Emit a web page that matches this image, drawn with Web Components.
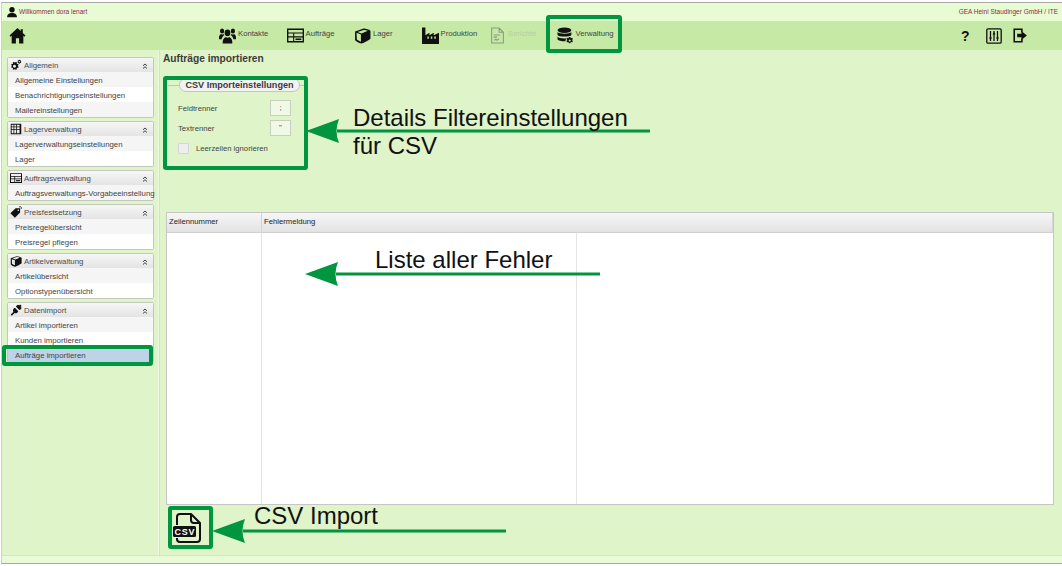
<!DOCTYPE html>
<html lang="de">
<head>
<meta charset="utf-8">
<title>Aufträge importieren</title>
<style>
    html, body { margin: 0; padding: 0; background: #fff; }
    body { font-family: "Liberation Sans", Arial, sans-serif; font-size: 8px; color: #333; }
</style>
</head>
<body>
<app-shell>
    <top-strip slot="top">
        <span slot="left">Willkommen dora lenart</span>
        <span slot="right">GEA Heini Staudinger GmbH / ITE</span>
    </top-strip>
    <main-nav slot="nav">
        <nav-item icon="people">Kontakte</nav-item>
        <nav-item icon="orders">Aufträge</nav-item>
        <nav-item icon="box">Lager</nav-item>
        <nav-item icon="factory">Produktion</nav-item>
        <nav-item icon="report" disabled>Berichte</nav-item>
        <nav-item icon="database">Verwaltung</nav-item>
    </main-nav>

    <side-panel slot="side" icon="cogs" label="Allgemein">
        <side-link>Allgemeine Einstellungen</side-link>
        <side-link>Benachrichtigungseinstellungen</side-link>
        <side-link>Mailereinstellungen</side-link>
    </side-panel>
    <side-panel slot="side" icon="grid" label="Lagerverwaltung">
        <side-link>Lagerverwaltungseinstellungen</side-link>
        <side-link>Lager</side-link>
    </side-panel>
    <side-panel slot="side" icon="orders" label="Auftragsverwaltung">
        <side-link>Auftragsverwaltungs-Vorgabeeinstellung</side-link>
    </side-panel>
    <side-panel slot="side" icon="tags" label="Preisfestsetzung">
        <side-link>Preisregelübersicht</side-link>
        <side-link>Preisregel pflegen</side-link>
    </side-panel>
    <side-panel slot="side" icon="box" label="Artikelverwaltung">
        <side-link>Artikelübersicht</side-link>
        <side-link>Optionstypenübersicht</side-link>
    </side-panel>
    <side-panel slot="side" icon="plug" label="Datenimport">
        <side-link>Artikel importieren</side-link>
        <side-link>Kunden importieren</side-link>
        <side-link selected>Aufträge importieren</side-link>
    </side-panel>

    <import-view></import-view>
</app-shell>
<note-layer></note-layer>

<script>
const ICONS = {
    user: '<circle cx="8" cy="5" r="3.6"/><path d="M1.500 15c0-4 2.500-5 4.500-5.600h4c2 .6 4.500 1.600 4.500 5.600z"/>',
    home: '<path fill-rule="evenodd" d="M8 1 .5 8l1 1.100L2.500 8.200V15.500h4v-5h3v5h4V8.200l1 .9 1-1.100-2.500-2.300V2h-2v1.800z"/>',
    people: '<ellipse cx="8" cy="5.500" rx="2.700" ry="3.200"/><path d="M3.500 15.500c-.3-3 .5-5.500 3-6.200l1.500 1 1.500-1c2.500.7 3.300 3.200 3 6.200z"/><ellipse cx="2.900" cy="3.800" rx="2" ry="2.400"/><ellipse cx="13.100" cy="3.800" rx="2" ry="2.400"/><path d="M0 11.500c-.2-2.700.4-4.500 1.900-5l1 .7 1-.7c.6.300 1 .6 1.300 1-1.700 1-2.500 2.400-2.700 4zM16 11.500c.2-2.700-.4-4.500-1.900-5l-1 .7-1-.7c-.6.300-1 .6-1.300 1 1.700 1 2.500 2.400 2.700 4z"/>',
    orders: '<path fill-rule="evenodd" d="M0 1.500h16v13H0zm1.300 1.300v2.400h13.400V2.800zm0 3.400v2.600h4.500V6.200zm5.500 0v2.600h7.900V6.200zM1.300 9.800v3.400h4.500V9.800zm5.500 0v3.400h7.900V9.800z"/><path d="M8 10.800h5.500v1.500H8z"/>',
    box: '<path fill-rule="evenodd" d="M1 4.200 9 1.500c2.500.2 5 .8 6.500 2V11c-2.500 2-5.500 3.500-8.500 4.500-2.500-.5-4.500-1.500-6-3zm1.400 1.300.3 6.300c1.300 1 2.700 1.700 3.800 2V7zm1-.9L7 6l6-2.500c-1.200-.5-2.600-.8-4-.7z"/><path d="M8 7 14.500 4.400V10.500C12.500 12 10 13.500 8 14.300z"/><path fill="#c6e9a6" d="M3.500 8l2 .7v2l-2-.7z"/>',
    factory: '<path fill-rule="evenodd" d="M0 .5h3.200v7.200L7 5.500v2.200L11 5.500v2.200l5-2.200v10.500H0zm5 8.500v2h1.400V9zm3.300 0v2h1.400V9zm3.300 0v2H13V9z"/>',
    report: '<path fill="none" stroke="#8b9a80" stroke-width="1" d="M2.500 1h7l4 4v10h-11zM9.500 1v4h4M4.500 7.500h6M4.500 9.500h3M5 12.500l1.500-1 1 1 2-1.500"/>',
    database: '<ellipse cx="7" cy="3" rx="6.500" ry="2.600"/><path d="M.5 4.800c1 2 12 2 13 0v2.700c-1 2-12 2-13 0zM.5 9c1 2 7 2 8.500 1.600-.7.800-1 1.500-1 2.800-3 .2-6.700-.5-7.500-1.700z"/><path fill-rule="evenodd" d="M12.500 9.300l.6 1.200 1.300-.3.500 1.300-.9.800.9.800-.5 1.300-1.300-.3-.6 1.200h-1.200l-.6-1.200-1.300.3-.5-1.300.9-.8-.9-.8.5-1.300 1.300.3.600-1.200zM12 11.700a1 1 0 1 0 .01 0z"/>',
    cogs: '<path fill-rule="evenodd" d="M6 4.500l1 .2.800-.9 1.500.9-.4 1.200.7.700 1.200-.3.700 1.600-1 .7v1l1 .7-.7 1.600-1.200-.3-.7.700.4 1.200-1.500.9-.8-.9h-1l-.8.900-1.500-.9.400-1.200-.7-.7-1.200.3-.7-1.600 1-.7v-1l-1-.7.700-1.600 1.200.3.700-.7-.4-1.200 1.500-.9.800.9zm0 3a2 2 0 1 0 .01 0z"/><path fill-rule="evenodd" d="M13 1l.4 1 1.100-.2.400 1.100-.8.700.8.700-.4 1.100-1.100-.2L13 6.200h-1l-.4-1-1.100.2-.4-1.100.8-.7-.8-.7.4-1.100 1.100.2.400-1zm-.5 1.800a.8.800 0 1 0 .01 0z"/>',
    grid: '<path fill-rule="evenodd" d="M1 1h14v14H1zm1.200 1.200v2.500h2.500V2.200zm3.500 0v2.500h2.500V2.200zm3.500 0v2.500h3.600V2.200zM2.200 5.700v2.500h2.500V5.700zm3.500 0v2.500h2.500V5.700zm3.500 0v2.500h3.600V5.700zM2.200 9.200v4.600h2.500V9.200zm3.500 0v4.600h2.500V9.200zm3.500 0v4.600h3.600V9.200z"/>',
    tags: '<path fill-rule="evenodd" d="M7.500 3h6v5.500l-7 7-6-6zm3.500 1.500a1 1 0 1 0 .01 0z"/><path fill="none" stroke="currentColor" d="M12 1.500c2-1.500 4-.2 3 2.500"/>',
    plug: '<path d="M6.500 5l4.500 4.500c-1 2.500-3 3.500-5 2.500l-3.500 3.500L1 14l3.500-3.500C3.500 8.500 4 6 6.500 5zM8 3.500 12.500 8c1.500-.5 2.500-1.500 3-3L14 4 15.500 2.500 13.500.5 12 2l-1-1C9.500 1.500 8.500 2 8 3.500z"/>',
    tune: '<path fill="none" stroke="currentColor" stroke-width="1.300" d="M2 .8h12c.7 0 1.200.5 1.200 1.200v12c0 .7-.5 1.200-1.200 1.200H2c-.7 0-1.200-.5-1.200-1.200V2C.8 1.300 1.300.8 2 .8zM4.500 3v10M8 3v10M11.500 3v10"/><path d="M3 9.500h3L4.500 12zM6.500 6.500h3L8 4zM10 9.500h3L11.500 12z"/>',
    exit: '<path fill="none" stroke="currentColor" stroke-width="1.700" d="M9.500 4.500V1.300H1.300v13.400h8.200v-3.200"/><path d="M4.500 6.200H9V3.300L14.800 8 9 12.700V9.800H4.500z"/>'
};

function iconSvg(name, size) {
    return `<svg xmlns="http://www.w3.org/2000/svg" viewBox="0 0 16 16" width="${size}" height="${size}" fill="currentColor" style="display:block">${ICONS[name]}</svg>`;
}

class AppShell extends HTMLElement {
    constructor() {
        super();
        this.attachShadow({ mode: 'open' }).innerHTML = `
            <style>
                :host { display: flex; flex-direction: column; width: 1062px; height: 566px; box-sizing: border-box; padding: 2px 0 2px 1px; background: #fff; overflow: hidden; }
                .frame { flex: 1; display: flex; flex-direction: column; min-height: 0; border-top: 1px solid #a9a9a9; border-left: 1px solid #c8d8bc; background: #dff4c8; }
                .body { flex: 1; display: flex; min-height: 0; }
                .side { width: 147px; padding: 7px 4px 0 5px; display: flex; flex-direction: column; gap: 3px; border-right: 1px solid #eef9e2; box-shadow: 1px 0 0 #cfe6b6; flex: none; }
                .main { flex: 1; min-width: 0; }
                .foot { height: 7px; background: #e9fad6; border-top: 1px solid #d3e8bd; flex: none; }
                .rule { height: 1px; background: #a9a9a9; flex: none; }
            </style>
            <div class="frame">
                <slot name="top"></slot>
                <slot name="nav"></slot>
                <div class="body">
                    <div class="side"><slot name="side"></slot></div>
                    <div class="main"><slot></slot></div>
                </div>
                <div class="foot"></div>
            </div>
            <div class="rule"></div>`;
    }
}

class TopStrip extends HTMLElement {
    constructor() {
        super();
        this.attachShadow({ mode: 'open' }).innerHTML = `
            <style>
                :host { display: flex; align-items: center; height: 18px; box-sizing: border-box; padding: 0 4px 2px 4px; background: #e8fcd3; color: #8a2a4a; font-size: 6.5px; flex: none; }
                svg { color: #111; margin: 2px 1px 0 0; }
                .gap { flex: 1; }
            </style>
            ${iconSvg('user', 12)}<slot name="left"></slot><div class="gap"></div><slot name="right"></slot>`;
    }
}

class MainNav extends HTMLElement {
    constructor() {
        super();
        this.attachShadow({ mode: 'open' }).innerHTML = `
            <style>
                :host { display: flex; align-items: center; height: 29px; background: #c6e9a6; color: #111; flex: none; }
                .home { width: 16px; margin: 0 194px 0 7px; flex: none; }
                .items { display: flex; flex: 1; }
                .tools { display: flex; align-items: center; margin-right: 34px; }
                .help { font: bold 14px "Liberation Sans", Arial, sans-serif; width: 24px; margin-right: 1px; }
                .tune { margin-right: 11px; }
            </style>
            <div class="home">${iconSvg('home', 17)}</div>
            <div class="items"><slot></slot></div>
            <div class="tools">
                <div class="help">?</div>
                <div class="tune">${iconSvg('tune', 16)}</div>
                ${iconSvg('exit', 15)}
            </div>`;
    }
}

class NavItem extends HTMLElement {
    constructor() {
        super();
        this.attachShadow({ mode: 'open' }).innerHTML = `
            <style>
                :host { display: flex; width: 67.5px; height: 17px; align-items: flex-start; color: #444; font-size: 7.7px; flex: none; }
                svg { color: #111; flex: none; margin-right: 2px; }
                span { line-height: 10px; padding-top: 2px; }
                :host([disabled]) { color: #b5cfa2; }
                :host([disabled]) svg { color: #8b9a80; }
            </style>
            ${iconSvg(this.getAttribute('icon'), 17)}<span><slot></slot></span>`;
    }
}

class SidePanel extends HTMLElement {
    constructor() {
        super();
        this.attachShadow({ mode: 'open' }).innerHTML = `
            <style>
                :host { display: block; border: 1px solid #c2c9bc; border-radius: 2px; background: #fff; font-size: 7.8px; color: #444; }
                .head { display: flex; align-items: center; height: 14px; padding: 0 5px 0 2px; background: linear-gradient(#f6f6f6, #e4e4e4); color: #4a4a4a; }
                svg { flex: none; color: #111; margin-right: 2px; }
                .label { flex: 1; white-space: nowrap; }
                .fold { flex: none; width: 6px; height: 6px; }
                .fold svg { color: #444; }
            </style>
            <div class="head">
                ${iconSvg(this.getAttribute('icon'), 12)}
                <div class="label">${this.getAttribute('label')}</div>
                <div class="fold"><svg viewBox="0 0 6 6" width="6" height="6"><path fill="none" stroke="currentColor" stroke-width="1" d="M1 2.800l2-1.800 2 1.800M1 5.500l2-1.800 2 1.800"/></svg></div>
            </div>
            <slot></slot>`;
    }
}

class SideLink extends HTMLElement {
    constructor() {
        super();
        this.attachShadow({ mode: 'open' }).innerHTML = `
            <style>
                :host { display: block; height: 15px; line-height: 17px; padding-left: 7px; background: #fff; white-space: nowrap; color: #444; }
                :host(:nth-of-type(odd)) { background: #f5f5f5; }
                :host([selected]) { background: #bcd3e8; }
            </style>
            <slot></slot>`;
    }
}

class CsvSettings extends HTMLElement {
    constructor() {
        super();
        this.attachShadow({ mode: 'open' }).innerHTML = `
            <style>
                :host { display: block; width: 136px; height: 78px; margin: 17px 0 0 9px; border-top: 1px solid #b9c9ac; font-size: 7.7px; color: #444; }
                .legend { width: 121px; box-sizing: border-box; margin: -8px 0 0 11px; height: 14px; text-align: center; line-height: 12px; border: 1px solid #c5c5c5; border-radius: 7px; background: #f2f2f2; font-weight: bold; font-size: 9.1px; color: #3a3a3a; white-space: nowrap; }
                .rows { padding: 8px 13px 0 10px; display: flex; flex-direction: column; gap: 4px; }
                .row { display: flex; align-items: center; justify-content: space-between; height: 16px; }
                .val { width: 19px; height: 14px; border: 1px solid #c7cfc0; background: #f0f9e6; text-align: center; line-height: 14px; font-size: 8px; }
                .check { display: flex; align-items: center; gap: 7px; height: 12px; margin-top: 2px; }
                .box { width: 9px; height: 9px; border: 1px solid #d5d5d5; background: #eee; border-radius: 1px; }
            </style>
            <div class="legend">CSV Importeinstellungen</div>
            <div class="rows">
                <div class="row"><span>Feldtrenner</span><div class="val">;</div></div>
                <div class="row"><span>Textrenner</span><div class="val">"</div></div>
                <div class="check"><div class="box"></div><span>Leerzeilen ignorieren</span></div>
            </div>`;
    }
}

class ErrorGrid extends HTMLElement {
    constructor() {
        super();
        this.attachShadow({ mode: 'open' }).innerHTML = `
            <style>
                :host { display: grid; grid-template-columns: 95px 315px 1fr; grid-template-rows: 20px 1fr; width: 888px; height: 293px; box-sizing: border-box; border: 1px solid #c6c6c6; background: #fff; font-size: 7.7px; color: #222; margin-left: 7px; }
                .th { background: linear-gradient(#f7f7f7, #e2e2e2); border-bottom: 1px solid #d0d0d0; border-right: 1px solid #d4d4d4; line-height: 18px; padding-left: 2px; }
                .th:nth-child(3) { border-right: 0; }
                .td { border-right: 1px solid #e4e4e4; }
                .td:last-child { border-right: 0; }
            </style>
            <div class="th">Zeilennummer</div><div class="th">Fehlermeldung</div><div class="th"></div>
            <div class="td"></div><div class="td"></div><div class="td"></div>`;
    }
}

class ImportView extends HTMLElement {
    constructor() {
        super();
        this.attachShadow({ mode: 'open' }).innerHTML = `
            <style>
                :host { display: block; height: 100%; }
                h1 { margin: 0; font-size: 10.2px; line-height: 12px; color: #3c3c3c; padding: 3px 0 0 4px; height: 15px; white-space: nowrap; }
                .spacer { height: 48px; }
                .csv { width: 30px; height: 30px; margin: 8px 0 0 13px; color: #111; }
                .csv text { font: bold 9px "Liberation Sans", Arial, sans-serif; fill: #fff; }
            </style>
            <h1>Aufträge importieren</h1>
            <csv-settings></csv-settings>
            <div class="spacer"></div>
            <error-grid></error-grid>
            <div class="csv">
                <svg viewBox="0 0 30 30" width="30" height="30" style="display:block">
                    <path fill="none" stroke="currentColor" stroke-width="2" stroke-linejoin="round" d="M5 12V4c0-1.700 1.300-3 3-3h11l9 9v16c0 1.700-1.300 3-3 3H8c-1.700 0-3-1.300-3-3v-1"/>
                    <path fill="none" stroke="currentColor" stroke-width="2" d="M19 1v6c0 1.700 1.300 3 3 3h6"/>
                    <rect x="1" y="13" width="23" height="11" rx="1.500" fill="currentColor"/>
                    <text x="2.500" y="21.800" textLength="20">CSV</text>
                </svg>
            </div>`;
    }
}

class NoteLayer extends HTMLElement {
    constructor() {
        super();
        const arrow = (x, y, end) => `<path d="M${x} ${y}L${x + 33} ${y - 12}Q${x + 28} ${y} ${x + 33} ${y + 12}z"/><rect x="${x + 31}" y="${y - 1.5}" width="${end - x - 31}" height="3"/>`;
        this.attachShadow({ mode: 'open' }).innerHTML = `
            <style>
                :host { position: absolute; left: 0; top: 0; width: 1062px; height: 566px; pointer-events: none; display: block; font-family: "Liberation Sans", Arial, sans-serif; color: #111; }
                svg { position: absolute; left: 0; top: 0; }
                .note { position: absolute; font-size: 24px; line-height: 28px; white-space: nowrap; }
                rect.box { fill: none; stroke: #00963f; stroke-width: 4; }
            </style>
            <svg width="1062" height="566" fill="#00963f">
                <rect class="box" x="548" y="17" width="72" height="34" rx="1"/>
                <rect class="box" x="165" y="78" width="141" height="90" rx="1"/>
                <rect class="box" x="4" y="347" width="147" height="17" rx="1"/>
                <rect class="box" x="170" y="508" width="41" height="39" rx="1"/>
                ${arrow(306, 131, 650)}
                ${arrow(305, 274, 600)}
                ${arrow(212, 531, 506)}
            </svg>
            <div class="note" style="left:353px;top:104px">Details Filtereinstellungen<br>für CSV</div>
            <div class="note" style="left:375px;top:246px">Liste aller Fehler</div>
            <div class="note" style="left:254px;top:502px">CSV Import</div>`;
    }
}

customElements.define('app-shell', AppShell);
customElements.define('top-strip', TopStrip);
customElements.define('main-nav', MainNav);
customElements.define('nav-item', NavItem);
customElements.define('side-panel', SidePanel);
customElements.define('side-link', SideLink);
customElements.define('csv-settings', CsvSettings);
customElements.define('error-grid', ErrorGrid);
customElements.define('import-view', ImportView);
customElements.define('note-layer', NoteLayer);
</script>
</body>
</html>
